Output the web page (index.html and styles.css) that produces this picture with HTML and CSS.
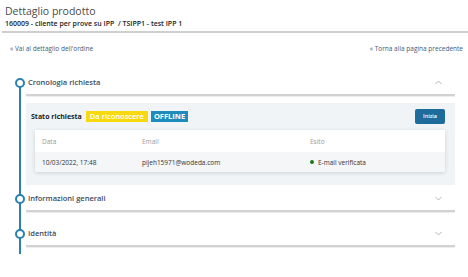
FILE: index.html
```html
<!DOCTYPE html>
<html lang="it">
<head>
<meta charset="utf-8">
<title>Dettaglio prodotto</title>
<link rel="stylesheet" href="styles.css">
</head>
<body>
<header class="page-head">
  <h1 class="title">Dettaglio prodotto</h1>
  <div class="subtitle">160009 - cliente per prove su IPP&nbsp; / TSIPP1 - test IPP 1</div>
</header>
<nav class="links">
  <a class="link" href="#">« Vai al dettaglio dell'ordine</a>
  <a class="link" href="#">« Torna alla pagina precedente</a>
</nav>
<div class="timeline">
  <section class="step open">
    <div class="step-head">
      <span class="dot"></span>
      <span class="step-title">Cronologia richiesta</span>
      <svg class="chev" width="7" height="5" viewBox="0 0 7 5"><polyline points="0.5,4 3.5,1 6.5,4" fill="none" stroke="#b5b5b5" stroke-width="1"/></svg>
    </div>
    <div class="panel">
      <div class="status-row">
        <div class="status-left">
          <span class="status-label">Stato richiesta</span>
          <span class="badge badge-yellow">Da riconoscere</span>
          <span class="badge badge-blue">OFFLINE</span>
        </div>
        <button class="btn">Inizia</button>
      </div>
      <div class="card">
        <div class="cell head">Data</div>
        <div class="cell head">Email</div>
        <div class="cell head">Esito</div>
        <div class="cell body">10/03/2022, 17:48</div>
        <div class="cell body">pijeh15971@wodeda.com</div>
        <div class="cell body"><span class="ok-dot"></span>E-mail verificata</div>
      </div>
    </div>
  </section>
  <section class="step closed">
    <div class="step-head">
      <span class="dot"></span>
      <span class="step-title">Informazioni generali</span>
      <svg class="chev" width="7" height="5" viewBox="0 0 7 5"><polyline points="0.5,1 3.5,4 6.5,1" fill="none" stroke="#b5b5b5" stroke-width="1"/></svg>
    </div>
  </section>
  <section class="step closed">
    <div class="step-head">
      <span class="dot"></span>
      <span class="step-title">Identità</span>
      <svg class="chev" width="7" height="5" viewBox="0 0 7 5"><polyline points="0.5,1 3.5,4 6.5,1" fill="none" stroke="#b5b5b5" stroke-width="1"/></svg>
    </div>
  </section>
</div>
</body>
</html>
```
FILE: styles.css
```css
* { box-sizing: border-box; }
body {
  margin: 0;
  font-family: "Open Sans", "Noto Sans", sans-serif;
  color: #333;
  background: #fff;
}
.page-head {
  padding: 4px 0 2px 3px;
  margin-left: 2px;
  border-bottom: 2px solid #cfcfcf;
}
.title {
  margin: 0;
  font-size: 10.5px;
  font-weight: 400;
  line-height: 14px;
  color: #4a4a4a;
}
.subtitle {
  font-size: 7px;
  font-weight: 600;
  line-height: 11px;
  color: #222;
}
.links {
  display: flex;
  justify-content: space-between;
  padding: 11px 5px 0 10px;
  font-size: 6.5px;
  line-height: 9px;
}
.link {
  color: #3d5b78;
  text-decoration: none;
}
.timeline {
  position: relative;
  margin: 19px 13px 0 19px;
  padding-bottom: 7px;
}
.timeline::before {
  content: "";
  position: absolute;
  left: 0;
  top: 11px;
  bottom: 0;
  width: 2px;
  background: #2a80af;
}
.step {
  position: relative;
  padding-left: 7px;
}
.step.open { margin-bottom: 3px; }
.step.closed { margin-bottom: 11px; }
.step.closed:last-child { margin-bottom: 0; }
.step-head {
  display: flex;
  align-items: center;
  justify-content: space-between;
  height: 24px;
  padding: 0 13px 2px 2px;
  border-bottom: 2px solid #d2d2d2;
  box-shadow: 0 1px 0 #ededed;
}
.dot {
  position: absolute;
  left: -4px;
  top: 6px;
  width: 10px;
  height: 10px;
  border: 2px solid #2a80af;
  border-radius: 50%;
  background: #fff;
}
.step-title {
  font-size: 7.5px;
  font-weight: 600;
  color: #3b4b5c;
}
.panel {
  margin-top: 7px;
  background: #f1f4f7;
  padding: 5px 10px 13px 5px;
}
.status-row {
  display: flex;
  align-items: center;
  justify-content: space-between;
  height: 16px;
}
.status-left {
  display: flex;
  align-items: center;
}
.status-label {
  font-size: 7px;
  font-weight: 700;
  color: #222;
  margin-right: 4px;
}
.badge {
  height: 11px;
  line-height: 11px;
  padding: 0 4px;
  font-size: 7.5px;
  font-weight: 600;
  color: #fff;
}
.badge-yellow { background: #f8d80f; }
.badge-blue { background: #1d8cbd; margin-left: 3px; font-weight: 700; padding: 0 3px; }
.btn {
  width: 30px;
  height: 15px;
  padding: 0;
  border: none;
  border-radius: 2px;
  background: #1d6c9b;
  color: #fff;
  font-family: inherit;
  font-size: 5.5px;
  font-weight: 600;
}
.card {
  margin: 6px 0 0 4px;
  background: #fff;
  box-shadow: 0 1px 4px rgba(0, 0, 0, 0.15);
  display: grid;
  grid-template-columns: 100px 168px 1fr;
}
.cell {
  display: flex;
  align-items: center;
  padding-left: 7px;
  font-size: 6.5px;
}
.cell.head {
  height: 22px;
  color: #999;
}
.cell.body {
  height: 20px;
  background: #f4f6f8;
  color: #333;
}
.ok-dot {
  width: 4px;
  height: 4px;
  border-radius: 50%;
  background: #1b7a1b;
  margin-right: 4px;
}
```
